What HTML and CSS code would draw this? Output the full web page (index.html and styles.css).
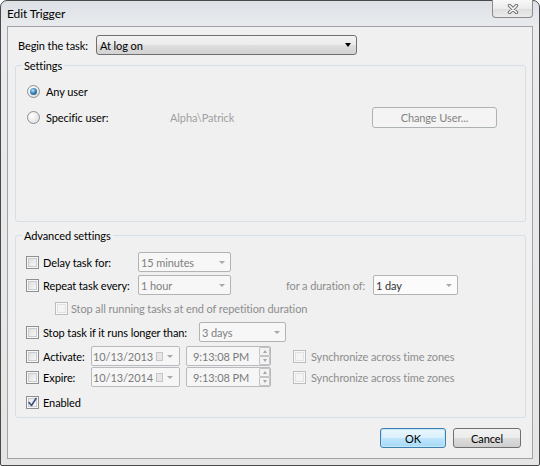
FILE: index.html
```html
<!DOCTYPE html>
<html>
<head>
<meta charset="utf-8">
<title>Edit Trigger</title>
<link rel="stylesheet" href="styles.css">
</head>
<body>
<div class="window">
  <div class="titlebar">
    <span class="title">Edit Trigger</span>
    <span class="close">
      <svg width="12" height="10" viewBox="0 0 12 10">
        <path d="M2.5 1.5 L9.5 8.5 M9.5 1.5 L2.5 8.5" stroke="#6b6b6b" stroke-width="3.4" stroke-linecap="round"/>
        <path d="M2.5 1.5 L9.5 8.5 M9.5 1.5 L2.5 8.5" stroke="#ffffff" stroke-width="1.6" stroke-linecap="round"/>
      </svg>
    </span>
  </div>
  <div class="client">
    <div class="begin">
      <span class="begin-label">Begin the task:</span>
      <div class="combo combo-main"><span class="combo-text">At log on</span><span class="arrow arrow-dark"></span></div>
    </div>

    <fieldset class="group group-settings">
      <legend>Settings</legend>
      <div class="srow srow1">
        <span class="radio checked"></span><span class="rlabel">Any user</span>
      </div>
      <div class="srow srow2">
        <span class="radio"></span><span class="rlabel user-label">Specific user:</span><span class="user-name">Alpha\Patrick</span><span class="btn btn-disabled btn-change">Change User...</span>
      </div>
    </fieldset>

    <fieldset class="group group-adv">
      <legend>Advanced settings</legend>
      <div class="arow first">
        <span class="cb"></span><span class="lbl w-delay">Delay task for:</span>
        <div class="combo combo-dis combo-sm"><span class="combo-text">15 minutes</span><span class="arrow arrow-gray"></span></div>
      </div>
      <div class="arow">
        <span class="cb"></span><span class="lbl w-delay">Repeat task every:</span>
        <div class="combo combo-dis combo-sm"><span class="combo-text">1 hour</span><span class="arrow arrow-gray"></span></div>
        <span class="dur-label">for a duration of:</span>
        <div class="combo combo-day"><span class="combo-text">1 day</span><span class="arrow arrow-gray"></span></div>
      </div>
      <div class="arow indent">
        <span class="cb cb-dis"></span><span class="lbl gray stopall">Stop all running tasks at end of repetition duration</span>
      </div>
      <div class="arow g4">
        <span class="cb"></span><span class="lbl w-stop">Stop task if it runs longer than:</span>
        <div class="combo combo-dis combo-days"><span class="combo-text">3 days</span><span class="arrow arrow-gray"></span></div>
      </div>
      <div class="arow g4">
        <span class="cb"></span><span class="lbl w-act">Activate:</span>
        <div class="picker date"><span class="picker-text">10/13/2013</span><span class="cal"></span><span class="arrow arrow-gray arrow-small"></span></div>
        <div class="picker time"><span class="picker-text time-text">9:13:08 PM</span><span class="spin"><span class="spin-btn"><span class="up"></span></span><span class="spin-btn"><span class="down"></span></span></span></div>
        <span class="cb cb-dis sync-cb"></span><span class="lbl gray sync">Synchronize across time zones</span>
      </div>
      <div class="arow g1">
        <span class="cb"></span><span class="lbl w-act">Expire:</span>
        <div class="picker date"><span class="picker-text">10/13/2014</span><span class="cal"></span><span class="arrow arrow-gray arrow-small"></span></div>
        <div class="picker time"><span class="picker-text time-text">9:13:08 PM</span><span class="spin"><span class="spin-btn"><span class="up"></span></span><span class="spin-btn"><span class="down"></span></span></span></div>
        <span class="cb cb-dis sync-cb"></span><span class="lbl gray sync">Synchronize across time zones</span>
      </div>
      <div class="arow g5">
        <span class="cb cb-checked">
          <svg width="11" height="11" viewBox="0 0 11 11"><path d="M2 5.5 L4.5 8.5 L9 1.5" fill="none" stroke="#3d4f7f" stroke-width="1.6" stroke-linejoin="round" stroke-linecap="round"/></svg>
        </span><span class="lbl">Enabled</span>
      </div>
    </fieldset>

    <div class="buttons">
      <span class="btn btn-default">OK</span>
      <span class="btn btn-cancel">Cancel</span>
    </div>
  </div>
</div>
</body>
</html>
```

FILE: styles.css
```css
body {
  margin: 0;
  font-family: Lato, "Open Sans", sans-serif;
  font-size: 11px;
  letter-spacing: -0.1px;
  color: #000;
  background: #fff;
}

.window {
  width: 540px;
  height: 466px;
  box-sizing: border-box;
  border: 1px solid #4a4a4a;
  border-radius: 7px 7px 2px 2px;
  background: linear-gradient(to bottom, #dde1e6 0px, #e9ebee 26px, #e5e5e5 100%);
  padding: 0 6px 6px 6px;
  display: flex;
  flex-direction: column;
}

.titlebar {
  height: 25px;
  display: flex;
  justify-content: space-between;
  align-items: flex-start;
}

.title {
  padding-top: 6px;
  line-height: 14px;
  font-size: 12px;
  color: #000;
}

.close {
  margin-top: -1px;
  width: 41px;
  height: 18px;
  box-sizing: border-box;
  border: 1px solid #8a8a8a;
  border-top: none;
  border-radius: 0 0 4px 4px;
  background: linear-gradient(to bottom, #f8f8f8 0%, #ececec 50%, #dedede 51%, #ebebeb 100%);
  display: flex;
  align-items: center;
  justify-content: center;
}

.client {
  flex: 1;
  border: 1px solid #a3a3a3;
  background: #f0f0f0;
  display: flex;
  flex-direction: column;
}

.begin {
  display: flex;
  align-items: center;
  margin: 8px 0 0 10px;
}

.begin-label {
  width: 78px;
}

.combo {
  display: flex;
  align-items: center;
  height: 20px;
  box-sizing: border-box;
  border: 1px solid #b3b3b3;
  border-radius: 2px;
  background: #f7f7f7;
}

.combo-text {
  flex: 1;
  padding-left: 2px;
  white-space: nowrap;
}

.combo-main {
  width: 261px;
  border: 1px solid #707070;
  border-radius: 3px;
  background: linear-gradient(to bottom, #f3f3f3 0%, #ebebeb 50%, #dedede 51%, #d2d2d2 100%);
}

.combo-main .combo-text {
  padding-left: 3px;
}

.combo-dis {
  color: #808080;
}

.combo-sm {
  width: 93px;
}

.combo-day {
  width: 85px;
  color: #333;
  background: #fbfbfb;
}

.combo-days {
  width: 87px;
}

.arrow {
  width: 0;
  height: 0;
  border-left: 3.5px solid transparent;
  border-right: 3.5px solid transparent;
  border-top: 4px solid #000;
  margin-right: 5px;
}

.arrow-gray {
  border-top-color: #a8a8a8;
  border-left-width: 3px;
  border-right-width: 3px;
  border-top-width: 3px;
}

.arrow-small {
  margin-right: 6px;
  margin-left: 4px;
}

.group {
  margin: 3px 0 0 7px;
  width: 511px;
  box-sizing: border-box;
  border: 1px solid #d5dfe5;
  border-radius: 3px;
  padding: 0;
  min-width: 0;
}

.group legend {
  padding: 0 2px;
  margin-left: 6px;
  line-height: 15px;
}

.group-settings {
  height: 164px;
}

.group-adv {
  height: 190px;
  margin-top: 6px;
}

.srow {
  display: flex;
  align-items: center;
  padding-left: 11px;
}

.srow1 {
  height: 20px;
  margin-top: 8px;
}

.srow2 {
  height: 21px;
  margin-top: 6px;
}

.radio {
  width: 13px;
  height: 13px;
  box-sizing: border-box;
  border: 1px solid #8e8f8f;
  border-radius: 50%;
  background: radial-gradient(circle at 35% 35%, #ffffff 0%, #e8e8e8 60%, #d2d4d6 100%);
  display: flex;
  align-items: center;
  justify-content: center;
  margin-right: 6px;
}

.radio.checked::after {
  content: "";
  width: 7px;
  height: 7px;
  border-radius: 50%;
  background: radial-gradient(circle at 40% 35%, #b9e4fa 0%, #3f88be 45%, #17406a 100%);
}

.user-label {
  width: 124px;
}

.user-name {
  width: 202px;
  color: #a0a0a0;
}

.btn {
  display: flex;
  align-items: center;
  justify-content: center;
  box-sizing: border-box;
  border-radius: 3px;
}

.btn-disabled {
  border: 1px solid #adb2b5;
  background: #f4f4f4;
  color: #838383;
}

.btn-change {
  width: 125px;
  height: 21px;
}

.arow {
  display: flex;
  align-items: center;
  height: 20px;
  padding-left: 10px;
  margin-top: 3px;
}

.arow.first {
  margin-top: 9px;
}

.arow.g4 {
  margin-top: 4px;
}

.arow.g1 {
  margin-top: 1px;
}

.arow.g5 {
  margin-top: 5px;
}

.arow.indent {
  padding-left: 39px;
}

.cb {
  width: 13px;
  height: 13px;
  box-sizing: border-box;
  border: 1px solid #8e8f8f;
  background: linear-gradient(135deg, #d6d8db 0%, #f2f2f2 70%, #fdfdfd 100%);
  box-shadow: inset 0 0 0 1px #f7f7f7, inset 0 0 0 2px #c9ccd0;
  margin-right: 4px;
  flex-shrink: 0;
  display: flex;
  align-items: center;
  justify-content: center;
}

.cb-dis {
  border-color: #bdbdbd;
  background: #f4f4f4;
  box-shadow: inset 0 0 0 1px #f9f9f9, inset 0 0 0 2px #e2e2e2;
  margin-right: 3px;
}

.cb-checked {
  background: linear-gradient(135deg, #e4e6e9 0%, #f6f6f6 70%, #ffffff 100%);
}

.lbl {
  white-space: nowrap;
}

.gray {
  color: #8d8d8d;
}

.w-delay {
  width: 95px;
}

.w-stop {
  width: 156px;
}

.w-act {
  width: 48px;
}

.dur-label {
  margin-left: 55px;
  width: 87px;
  color: #8d8d8d;
  white-space: nowrap;
}

.picker {
  display: flex;
  align-items: center;
  height: 20px;
  box-sizing: border-box;
  border: 1px solid #b8babe;
  border-radius: 2px;
  background: #f6f6f6;
  color: #7b7b7b;
}

.picker-text {
  flex: 1;
  padding-left: 1px;
  white-space: nowrap;
  overflow: hidden;
}

.date {
  width: 89px;
}

.cal {
  width: 7px;
  height: 9px;
  box-sizing: border-box;
  border: 1px solid #c6c6c6;
  background: #e6e6e6;
  flex-shrink: 0;
}

.time {
  width: 85px;
  margin-left: 6px;
  margin-right: 22px;
}

.time-text {
  padding-left: 6px;
}

.spin {
  display: flex;
  flex-direction: column;
  width: 11px;
  height: 18px;
  margin-right: 0;
}

.spin-btn {
  flex: 1;
  box-sizing: border-box;
  border: 1px solid #c4c4c4;
  border-radius: 1px;
  background: #f3f3f3;
  display: flex;
  align-items: center;
  justify-content: center;
}

.up {
  width: 0;
  height: 0;
  border-left: 2.5px solid transparent;
  border-right: 2.5px solid transparent;
  border-bottom: 3px solid #a6a6a6;
}

.down {
  width: 0;
  height: 0;
  border-left: 2.5px solid transparent;
  border-right: 2.5px solid transparent;
  border-top: 3px solid #a6a6a6;
}

.sync {
  margin-left: 2px;
}

.buttons {
  display: flex;
  justify-content: flex-end;
  gap: 7px;
  margin: 10px 11px 0 0;
}

.btn-default,
.btn-cancel {
  height: 20px;
  border: 1px solid #707070;
  background: linear-gradient(to bottom, #f2f2f2 0%, #ebebeb 50%, #dddddd 51%, #cfcfcf 100%);
}

.btn-default {
  width: 66px;
  border-color: #3c7fb1;
  box-shadow: inset 0 0 0 1px #c6e6f7;
  background: linear-gradient(to bottom, #eaf6fd 0%, #d9f0fc 50%, #bee6fd 51%, #a7d9f5 100%);
}

.btn-cancel {
  width: 68px;
}
```
